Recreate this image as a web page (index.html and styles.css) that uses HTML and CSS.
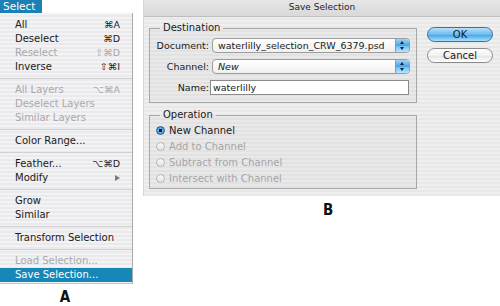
FILE: index.html
```html
<!DOCTYPE html>
<html lang="en">
<head>
    <meta charset="UTF-8">
    <title>Select menu and Save Selection</title>
    <link rel="stylesheet" href="styles.css">
</head>
<body>

    <!-- A: Select menu -->
    <div class="menu-col">
        <div class="menu-title">Select</div>
        <ul class="menu">
            <li class="item"><span>All</span><span class="key">&#8984;A</span></li>
            <li class="item"><span>Deselect</span><span class="key">&#8984;D</span></li>
            <li class="item off"><span>Reselect</span><span class="key">&#8679;&#8984;D</span></li>
            <li class="item"><span>Inverse</span><span class="key">&#8679;&#8984;I</span></li>
            <li class="sep"></li>
            <li class="item off"><span>All Layers</span><span class="key">&#8997;&#8984;A</span></li>
            <li class="item off"><span>Deselect Layers</span></li>
            <li class="item off"><span>Similar Layers</span></li>
            <li class="sep"></li>
            <li class="item"><span>Color Range...</span></li>
            <li class="sep"></li>
            <li class="item"><span>Feather...</span><span class="key">&#8997;&#8984;D</span></li>
            <li class="item"><span>Modify</span><span class="arrow"></span></li>
            <li class="sep"></li>
            <li class="item"><span>Grow</span></li>
            <li class="item"><span>Similar</span></li>
            <li class="sep"></li>
            <li class="item"><span>Transform Selection</span></li>
            <li class="sep"></li>
            <li class="item off"><span>Load Selection...</span></li>
            <li class="item active"><span>Save Selection...</span></li>
        </ul>
        <div class="fig-label label-a">A</div>
    </div>

    <!-- B: Save Selection dialog -->
    <div class="dialog-col">
        <div class="dialog">
            <div class="titlebar">Save Selection</div>
            <div class="dialog-body">
                <div class="groups">
                    <fieldset class="group">
                        <legend>Destination</legend>
                        <div class="field-row">
                            <label>Document:</label>
                            <div class="popup"><span>waterlilly_selection_CRW_6379.psd</span><span class="stepper"></span></div>
                        </div>
                        <div class="field-row">
                            <label>Channel:</label>
                            <div class="popup"><span class="italic">New</span><span class="stepper"></span></div>
                        </div>
                        <div class="field-row">
                            <label>Name:</label>
                            <div class="textbox">waterlilly</div>
                        </div>
                    </fieldset>
                    <fieldset class="group">
                        <legend>Operation</legend>
                        <div class="radio checked"><span class="dot"></span>New Channel</div>
                        <div class="radio off"><span class="dot"></span>Add to Channel</div>
                        <div class="radio off"><span class="dot"></span>Subtract from Channel</div>
                        <div class="radio off"><span class="dot"></span>Intersect with Channel</div>
                    </fieldset>
                </div>
                <div class="buttons">
                    <div class="btn default">OK</div>
                    <div class="btn">Cancel</div>
                </div>
            </div>
        </div>
        <div class="fig-label label-b">B</div>
    </div>

</body>
</html>
```

FILE: styles.css
```css
body, html {
    margin: 0;
    width: 500px;
    height: 306px;
    overflow: hidden;
    background: #ffffff;
    font-family: 'DejaVu Sans', Verdana, sans-serif;
}

body {
    display: flex;
}

/* Menu (A) */
.menu-col {
    width: 143px;
    flex-shrink: 0;
}

.menu-title {
    width: 42px;
    height: 13px;
    line-height: 13px;
    background-color: #1b80b4;
    color: white;
    font-size: 10.5px;
    padding-left: 3px;
    box-sizing: border-box;
}

.menu {
    list-style: none;
    margin: 0;
    padding: 5px 0 1px 0;
    width: 133px;
    box-sizing: border-box;
    border-right: 1px solid #a9a9a9;
    border-bottom: 1px solid #c4c4c4;
    background: repeating-linear-gradient(180deg, #f3f2f4 0, #f3f2f4 2px, #eae9eb 2px, #eae9eb 4px);
}

.item {
    height: 14px;
    line-height: 14px;
    display: flex;
    justify-content: space-between;
    align-items: center;
    padding: 0 12px 0 15px;
    font-size: 10px;
    color: #1a1a1a;
}

.item.off {
    color: #a9a9ab;
}

.item.active {
    background-color: #1787b8;
    color: white;
}

.key {
    font-size: 9.5px;
}

.arrow {
    width: 0;
    height: 0;
    border-top: 3.5px solid transparent;
    border-bottom: 3.5px solid transparent;
    border-left: 5px solid #7a7a7a;
}

.sep {
    height: 9px;
    display: flex;
    align-items: center;
}

.sep::after {
    content: "";
    flex: 1;
    height: 1px;
    background-color: #d0d0d2;
}

.fig-label {
    font-family: 'Liberation Sans Narrow', 'DejaVu Sans Condensed', sans-serif;
    font-weight: bold;
    font-size: 15px;
    line-height: 16px;
    color: #111;
}

.label-a {
    width: 130px;
    text-align: center;
    margin-top: 5px;
}

/* Dialog (B) */
.dialog-col {
    width: 357px;
}

.dialog {
    height: 196px;
    background: repeating-linear-gradient(180deg, #efefef 0, #efefef 2px, #e8e8e8 2px, #e8e8e8 4px);
    box-sizing: border-box;
    border-left: 1px solid #d6d6d6;
}

.titlebar {
    height: 17px;
    line-height: 15px;
    text-align: center;
    font-size: 9px;
    color: #222;
    background: linear-gradient(180deg, #e6e6e6, #d9d9d9);
    border-bottom: 1px solid #bdbdbd;
    box-sizing: border-box;
}

.dialog-body {
    display: flex;
    padding: 0 7px 0 5px;
}

.groups {
    width: 268px;
}

.group {
    margin: 5px 0 0 0;
    padding: 4px 6px 7px 0;
    border: 1px solid #a7a7a7;
    background-color: rgba(0, 0, 0, 0.025);
    font-size: 9.5px;
    color: #1a1a1a;
}

.group + .group {
    margin-top: 6px;
    padding: 1px 6px 2px 0;
}

.group legend {
    margin-left: 10px;
    padding: 0 3px;
    line-height: 12px;
    font-size: 10px;
}

.field-row {
    display: flex;
    align-items: center;
    height: 15px;
    margin-bottom: 6px;
}

.field-row:last-child {
    margin-bottom: 0;
}

.field-row label {
    width: 59px;
    text-align: right;
    padding-right: 3px;
}

.popup {
    flex: 1;
    height: 15px;
    box-sizing: border-box;
    border: 1px solid #9c9c9c;
    border-radius: 4px;
    background: linear-gradient(180deg, #ffffff, #f0f0f0);
    display: flex;
    align-items: center;
    justify-content: space-between;
    padding-left: 5px;
    overflow: hidden;
}

.italic {
    font-style: italic;
}

.stepper {
    width: 13px;
    height: 13px;
    border-left: 1px solid #7a9fc0;
    border-radius: 0 3px 3px 0;
    background: linear-gradient(180deg, #9fd3f5 0%, #4aa6e6 50%, #67bcf2 51%, #b8e6ff 100%);
    position: relative;
}

.stepper::before, .stepper::after {
    content: "";
    position: absolute;
    left: 4px;
    width: 0;
    height: 0;
    border-left: 2.5px solid transparent;
    border-right: 2.5px solid transparent;
}

.stepper::before {
    top: 2px;
    border-bottom: 3px solid #10243a;
}

.stepper::after {
    bottom: 2px;
    border-top: 3px solid #10243a;
}

.textbox {
    width: 199px;
    height: 15px;
    box-sizing: border-box;
    margin-left: -2px;
    border: 1px solid #8a8a8a;
    background: white;
    padding-left: 2px;
    line-height: 13px;
}

.radio {
    height: 16px;
    display: flex;
    align-items: center;
    padding-left: 6px;
    font-size: 10px;
}

.radio.off {
    color: #a5a5a5;
}

.dot {
    width: 9px;
    height: 9px;
    border-radius: 50%;
    box-sizing: border-box;
    border: 1px solid #b5b5b5;
    background: linear-gradient(180deg, #fafafa, #e2e2e2);
    margin-right: 4px;
}

.radio.checked .dot {
    border-color: #2c5f8a;
    background: radial-gradient(circle, #0d1d2c 0, #0d1d2c 1.5px, #5eb1e9 2px, #2f86c8 100%);
}

.buttons {
    margin-left: auto;
    width: 66px;
    padding-top: 10px;
}

.btn {
    height: 15px;
    line-height: 13px;
    box-sizing: border-box;
    border: 1px solid #8b8b8b;
    border-radius: 8px;
    text-align: center;
    font-size: 10px;
    color: #1a1a1a;
    background: linear-gradient(180deg, #ffffff 0%, #f1f1f1 50%, #e4e4e4 51%, #ffffff 100%);
    margin-bottom: 6px;
}

.btn.default {
    border-color: #3f6f9a;
    background: linear-gradient(180deg, #b7e0fb 0%, #6cbcf0 50%, #3fa2e4 51%, #a9e0ff 100%);
}

.label-b {
    margin-top: 6px;
    padding-left: 180px;
}
```
